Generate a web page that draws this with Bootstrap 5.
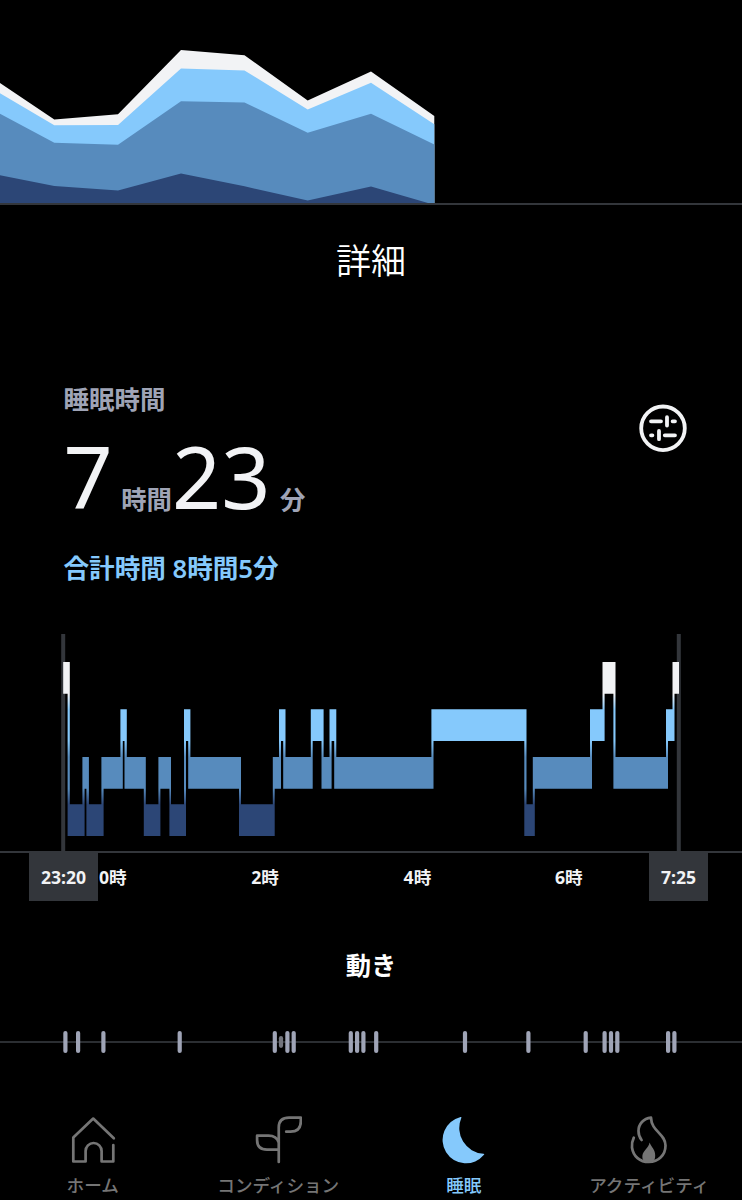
<!DOCTYPE html>
<html lang="ja" data-bs-theme="dark">
<head>
<meta charset="utf-8">
<meta name="viewport" content="width=device-width, initial-scale=1">
<title>睡眠</title>
<link href="https://cdn.jsdelivr.net/npm/bootstrap@5.3.0/dist/css/bootstrap.min.css" rel="stylesheet">
<style>
  :root { --awake:#f2f3f5; --rem:#85c9fc; --rule:#33363b; --muted:#9fa4b6; }
  body { background:#000; color:var(--awake); font-family:"Noto Sans","Noto Sans CJK JP",sans-serif; height:1200px; overflow:hidden; }
  svg { display:block; }
  .trend { height:205px; border-bottom:2px solid var(--rule); }
  .page-title { height:113px; line-height:107px; font-size:35px; font-weight:350; font-family:"Noto Sans CJK JP",sans-serif; }
  .summary { height:316px; padding:0 55px 0 63.5px; }
  .label-text { font-size:25.5px; line-height:36px; font-weight:600; color:var(--muted); margin-top:63px; }
  .duration { line-height:120px; height:120px; margin-top:-1px; white-space:nowrap; }
  .duration .num { font-size:86px; }
  .duration .unit { font-size:25.4px; font-weight:600; color:var(--muted); }
  .total { font-size:25.6px; line-height:36px; font-weight:600; color:var(--rem); margin-top:15px; }
  .filter-btn { margin-top:86px; width:48px; height:48px; }
  .axis-row { height:48px; padding-left:29px; font-size:17.6px; line-height:48px; font-weight:700; }
  .end-time { background:var(--rule); text-align:center; }
  .tick { width:152.3px; padding-left:1px; }
  .movement-title { font-size:25.3px; line-height:36px; font-weight:700; margin-top:46px; }
  .tabs-row { margin-top:57px; }
  .tab-item { color:#757575; font-size:17.6px; line-height:26px; font-weight:500; white-space:nowrap; }
  .tab-item.current { color:var(--rem); }
  .tab-item svg { margin-bottom:8px; }
</style>
</head>
<body>
<section class="trend">
  <svg width="742" height="203" viewBox="0 0 742 203">
    <path fill="#f2f3f5" d="M0 83 54.3 119.4 118 114.3 181 50 244.5 55.3 307.7 100.6 371 71.4 434.3 116V203H0z"/>
    <path fill="#85c9fc" d="M0 93.3 54.3 125.3 118 125 181 68.4 244.5 70.5 307.7 109.5 371 82.7 434.3 124.3V203H0z"/>
    <path fill="#578bbd" d="M0 113.7 54.3 142.7 118 144.7 181 101.2 244.5 102.4 307.7 132.7 371 113.7 434.3 144.6V203H0z"/>
    <path fill="#2c4676" d="M0 175.3 54.3 186 118 190.4 181 173.5 244.5 186.3 307.7 200.5 371 186.5 428 203H0z"/>
  </svg>
</section>

<h1 class="page-title text-center mb-0">詳細</h1>

<section class="summary d-flex justify-content-between align-items-start">
  <div>
    <div class="label-text">睡眠時間</div>
    <div class="duration"><span class="num">7</span><span class="unit" style="margin-left:8.5px">時間</span><span class="num">23</span><span class="unit" style="margin-left:9.5px">分</span></div>
    <div class="total">合計時間 8時間5分</div>
  </div>
  <button class="btn p-0 border-0 filter-btn" type="button" aria-label="表示設定">
    <svg width="48" height="48" fill="none" stroke="#f2f3f5" stroke-width="3.8" stroke-linecap="round">
      <circle cx="24" cy="24.3" r="21.8" stroke-width="3.8"/>
      <path d="M12 17.3H22M28 13.2V21.5M33.6 17.3H36M12 31.3H13.4M20 26.9V35.2M25.8 31.3H36"/>
    </svg>
  </button>
</section>

<section>
  <svg id="hypnogram" width="742" height="219" viewBox="0 634 742 219">
    <defs>
      <linearGradient id="stages" gradientUnits="userSpaceOnUse" x1="0" y1="662" x2="0" y2="836">
        <stop offset=".184" stop-color="#f2f3f5"/>
        <stop offset=".273" stop-color="#85c9fc"/>
        <stop offset=".454" stop-color="#85c9fc"/>
        <stop offset=".546" stop-color="#578bbd"/>
        <stop offset=".729" stop-color="#578bbd"/>
        <stop offset=".818" stop-color="#2c4676"/>
      </linearGradient>
    </defs>
    <path d="M63.2 634V852M678.8 634V852" stroke="#33363b" stroke-width="4"/>
    <path d="M0 852H742" stroke="#33363b" stroke-width="2"/>
    <path id="nightPath" fill="url(#stages)"/>
  </svg>
  <div class="axis-row d-flex">
    <div class="end-time" style="width:69px">23:20</div>
    <div class="tick">0時</div>
    <div class="tick">2時</div>
    <div class="tick">4時</div>
    <div class="flex-grow-1">6時</div>
    <div class="end-time" style="width:59px;margin-right:34px">7:25</div>
  </div>
</section>

<section>
  <h2 class="movement-title text-center mb-0">動き</h2>
  <svg id="movement" width="742" height="76" viewBox="0 983 742 76">
    <path d="M0 1042H742" stroke="#2b2e32" stroke-width="2"/>
  </svg>
</section>

<nav class="tabs-row row g-0 text-center">
  <div class="col-3 tab-item">
    <svg class="mx-auto" width="48" height="48" fill="none" stroke="currentColor" stroke-width="2.7" stroke-linecap="round" stroke-linejoin="round"><path d="M44.8 22.3 24.2 2.6 4.3 21.5V45.5H16.6V35a8 8 0 0 1 16 0V45.5H44.3V29"/></svg>
    ホーム
  </div>
  <div class="col-3 tab-item">
    <svg class="mx-auto" width="48" height="48" fill="none" stroke="currentColor" stroke-width="2.7" stroke-linecap="round" stroke-linejoin="round"><path d="M24.75 46V11.5Q24.75 1.6 35 1.6H46.8V5.5Q46.8 15.7 36.5 15.7H32.2M24.75 26.5Q22.5 19.7 14.5 19.7H3.1V24Q3.1 33.7 13 33.7H24.75"/></svg>
    コンディション
  </div>
  <div class="col-3 tab-item current">
    <svg class="mx-auto" width="48" height="48" fill="currentColor"><path d="M20.6 1.1Q21.8.7 21.3 2A25.8 25.8 0 0 0 43.4 37.8Q44.8 37.7 44 38.8A23.4 23.4 0 1 1 20.6 1.1z"/></svg>
    睡眠
  </div>
  <div class="col-3 tab-item">
    <svg class="mx-auto" width="48" height="48" fill="none" stroke="currentColor" stroke-width="2.7" stroke-linecap="round" stroke-linejoin="round"><path d="M8.8 21.6C7.2 25 6.5 28 7 31.5C8.2 40.5 15 46 23.8 46C33.5 46 40.5 39 40.5 29.5C40.5 17.5 26.3 15.5 26 1.6C18.5 2.5 13.5 8 13.5 15C13.5 18.5 14.5 21.5 16.6 24"/><path stroke="none" fill="currentColor" d="M24.6 26.5C26.5 31.5 30.2 33.5 30.2 39.2C30.2 42.5 29.5 44 28.5 45.5H19.3C17.5 43.5 17.2 42 17.4 39.5C18 34.5 23.6 32 24.6 26.5z"/></svg>
    アクティビティ
  </div>
</nav>

<script src="https://cdn.jsdelivr.net/npm/bootstrap@5.3.0/dist/js/bootstrap.bundle.min.js"></script>
<script>
  // Sleep stages through the night: [stage, start x, end x]
  const stageTop = { W: 662, R: 709.3, L: 757, D: 804.3 };
  const bandHeight = 31.7;
  const night = [
    ['W',63.2,69.8],['D',67.6,84.6],['L',82.4,88.9],['D',86.4,103.6],['L',101.4,122.8],['R',120.4,126.8],
    ['L',124.5,145.8],['D',143.8,160.4],['L',158.4,171],['D',169.4,186],['R',184,190.4],['L',188.2,241],
    ['D',239,274.7],['L',272.8,281],['R',279,285.5],['L',283.2,312.7],['R',310.8,323.6],['L',321.5,331.6],
    ['R',329.5,336.3],['L',334.2,433.5],['R',431.4,526.5],['D',524.3,534.8],['L',532.8,592],['R',590,604.6],
    ['W',602.5,615.5],['L',613.4,668],['R',666,674.5],['W',672.5,679]
  ];
  let d = '';
  night.forEach(([stage, from, to], i) => {
    const y = stageTop[stage];
    d += `M${from} ${y}H${to}v${bandHeight}H${from}z`;
    if (i + 1 < night.length) {
      const [next, start] = night[i + 1];
      const y1 = Math.min(y, stageTop[next]) + bandHeight, y2 = Math.max(y, stageTop[next]);
      d += `M${start} ${y1 - 1}H${to}V${y2 + 1}H${start}z`;
    }
  });
  document.getElementById('nightPath').setAttribute('d', d);

  // Movement marks, and one weak mark in the 2 o'clock group
  const marks = [65.4,78.1,103.4,179.7,274.8,287.4,293.7,350.8,357.1,363.4,376.2,465,528.4,585.7,604.6,611,617.3,668.1,674.4];
  const bars = marks.map(x => `<path d="M${x} 1033V1051" stroke="#9fa4b6" stroke-width="4.2" stroke-linecap="round"/>`).join('');
  document.getElementById('movement').innerHTML += bars + '<path d="M281 1038.2V1045.8" stroke="#73757d" stroke-width="4.2" stroke-linecap="round"/>';
</script>
</body>
</html>
